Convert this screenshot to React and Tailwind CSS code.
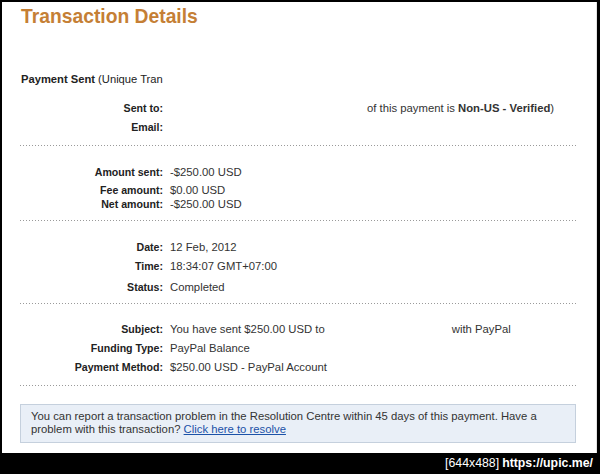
import React from "react";

function Row({ mt, label, children }) {
  return (
    <div className={`flex h-[14px] leading-[14px] ${mt}`}>
      <div className="w-[142px] shrink-0 text-right font-bold text-[10.6px] text-[#222]">{label}</div>
      <div className="pl-[7px] text-[11.3px] whitespace-nowrap text-[#333]">{children}</div>
    </div>
  );
}

function Dots({ mt }) {
  return (
    <div
      className={`h-px w-[558px] -ml-px bg-[linear-gradient(to_right,#9a9a9a_1px,transparent_1px)] bg-[length:3px_1px] ${mt}`}
    />
  );
}

export default function App() {
  return (
    <div className="w-[600px] h-[474px] bg-black flex flex-col overflow-hidden font-['Liberation_Sans',Arial,sans-serif]">
      <div className="ml-[2px] mt-[2px] w-[595px] h-[451px] shrink-0 bg-white pl-[19px] pt-[4px] border-r border-[#e4e4e4]">
        <h1 className="text-[19.3px] leading-[22px] font-bold text-[#c57f35]">Transaction Details</h1>
        <div className="mt-[44px] h-[14px] text-[11.2px] leading-[14px] text-[#222]">
          <span className="font-bold">Payment Sent</span> (Unique Tran
        </div>
        <Row mt="mt-[15px]" label="Sent to:">
          <span className="ml-[197px]">
            of this payment is <span className="font-bold">Non-US - Verified</span>)
          </span>
        </Row>
        <Row mt="mt-[5px]" label="Email:"></Row>
        <Dots mt="mt-[11px]" />
        <Row mt="mt-[19px]" label="Amount sent:">-$250.00 USD</Row>
        <Row mt="mt-[4px]" label="Fee amount:">$0.00 USD</Row>
        <Row mt="mt-0" label="Net amount:">-$250.00 USD</Row>
        <Dots mt="mt-[9px]" />
        <Row mt="mt-[19px]" label="Date:">12 Feb, 2012</Row>
        <Row mt="mt-[5px]" label="Time:">18:34:07 GMT+07:00</Row>
        <Row mt="mt-[7px]" label="Status:">Completed</Row>
        <Dots mt="mt-[9px]" />
        <Row mt="mt-[18px]" label="Subject:">
          You have sent $250.00 USD to<span className="ml-[127px]">with PayPal</span>
        </Row>
        <Row mt="mt-[5px]" label="Funding Type:">PayPal Balance</Row>
        <Row mt="mt-[5px]" label="Payment Method:">$250.00 USD - PayPal Account</Row>
        <Dots mt="mt-[11px]" />
        <div className="mt-[18px] -ml-px w-[556px] border border-[#c5d0dd] bg-[#e9eff7] pt-[5px] pb-[6px] pl-[10px] text-[11.3px] leading-[13px] text-[#333]">
          You can report a transaction problem in the Resolution Centre within 45 days of this payment. Have a
          <br />
          problem with this transaction?{" "}
          <a href="#" className="text-[#1b52a8] underline">Click here to resolve</a>
        </div>
      </div>
      <div className="flex-1 flex items-center justify-end pr-[7px] text-white text-[12.3px] leading-none">
        <span>[644x488]</span>
        <span className="ml-[3px] font-bold">https://upic.me/</span>
      </div>
    </div>
  );
}
